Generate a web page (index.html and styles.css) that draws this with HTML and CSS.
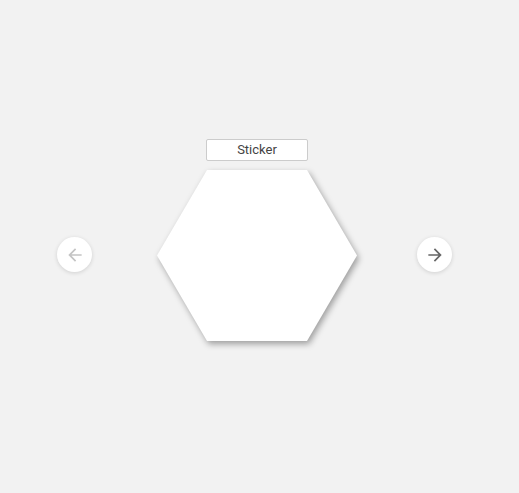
FILE: index.html
```html
<!DOCTYPE html>
<html>
<head>
<meta charset="utf-8">
<link rel="stylesheet" href="styles.css">
</head>
<body>
<div class="stage">
  <button class="nav nav-prev" aria-label="Previous">
    <svg viewBox="0 0 24 24" width="20" height="20"><path d="M20 11H7.83l5.59-5.59L12 4l-8 8 8 8 1.41-1.41L7.83 13H20v-2z"/></svg>
  </button>
  <div class="sticker-col">
    <div class="label">Sticker</div>
    <div class="hex-shadow"><div class="hex"></div></div>
  </div>
  <button class="nav nav-next" aria-label="Next">
    <svg viewBox="0 0 24 24" width="20" height="20"><path d="M12 4l-1.41 1.41L16.17 11H4v2h12.17l-5.58 5.59L12 20l8-8z"/></svg>
  </button>
</div>
</body>
</html>
```
FILE: styles.css
```css
html, body {
  margin: 0;
  padding: 0;
  background: #f2f2f2;
  font-family: Roboto, "Liberation Sans", sans-serif;
}
body {
  width: 519px;
  height: 493px;
  overflow: hidden;
}
.stage {
  display: flex;
  align-items: flex-start;
  padding-top: 139px;
  padding-left: 57px;
}
.nav {
  width: 35px;
  height: 35px;
  margin-top: 98px;
  border: none;
  border-radius: 50%;
  background: #fff;
  box-shadow: 0 1px 4px rgba(0,0,0,0.14);
  display: flex;
  align-items: center;
  justify-content: center;
  padding: 0;
}
.nav-prev svg { fill: #c4c4c4; }
.nav-next svg { fill: #666; }
.sticker-col {
  width: 200px;
  margin: 0 60px 0 65px;
  display: flex;
  flex-direction: column;
  align-items: center;
}
.label {
  box-sizing: border-box;
  width: 102px;
  height: 22px;
  background: #fff;
  border: 1px solid #cccccc;
  border-radius: 2px;
  font-size: 13px;
  line-height: 20px;
  text-align: center;
  color: #444;
}
.hex-shadow {
  margin-top: 9px;
  filter: drop-shadow(2px 3px 3px rgba(0,0,0,0.35));
}
.hex {
  width: 200px;
  height: 171px;
  background: #fff;
  clip-path: polygon(25% 0, 75% 0, 100% 50%, 75% 100%, 25% 100%, 0 50%);
}
```
